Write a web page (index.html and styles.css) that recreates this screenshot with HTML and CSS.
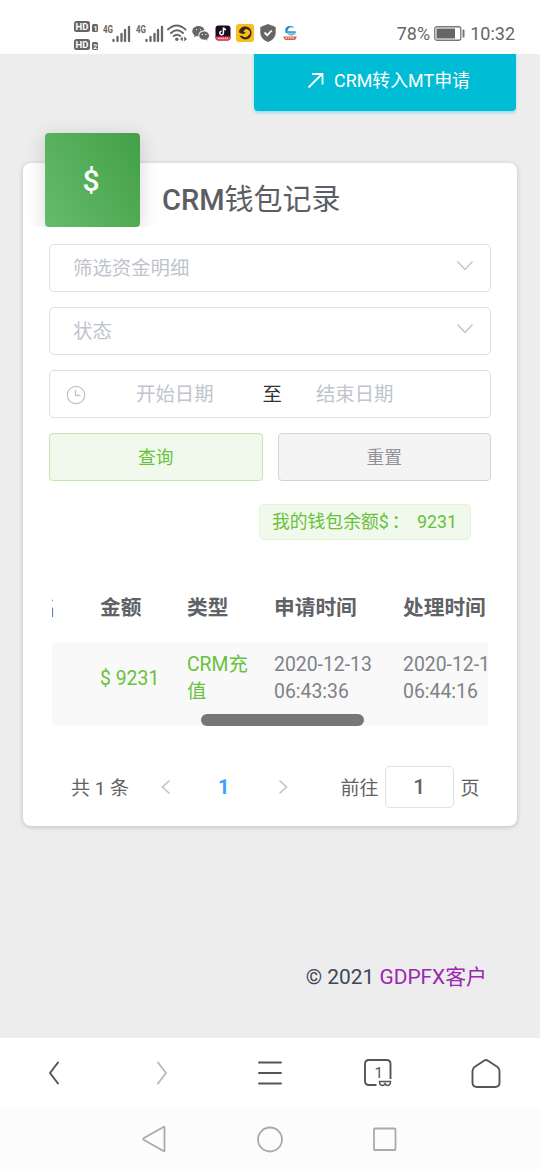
FILE: index.html
```html
<!DOCTYPE html>
<html lang="zh-CN">
<head>
    <meta charset="UTF-8">
    <meta name="viewport" content="width=device-width, initial-scale=1.0">
    <title>CRM钱包记录</title>
    <link rel="stylesheet" href="styles.css">
</head>
<body>

    <header class="status-bar">
        <div class="status-icons">
            <svg class="hd" width="25" height="32" viewBox="0 0 25 32">
                <rect x="0" y="2" width="16" height="11" rx="2.5" fill="#666"/>
                <text x="1.6" y="11" class="hd-text">HD</text>
                <rect x="18" y="5" width="6" height="8" rx="1.5" fill="#666"/>
                <text x="19.4" y="11.6" class="hd-num">1</text>
                <rect x="0" y="20" width="16" height="11" rx="2.5" fill="#666"/>
                <text x="1.6" y="29" class="hd-text">HD</text>
                <rect x="18" y="23" width="6" height="8" rx="1.5" fill="#666"/>
                <text x="19.2" y="29.6" class="hd-num">2</text>
            </svg>
            <svg class="signal" width="28" height="20" viewBox="0 0 28 20">
                <text x="0" y="10" class="net" textLength="10" lengthAdjust="spacingAndGlyphs">4G</text>
                <path d="M10.5 18v-1M14.5 18v-4M18.500 18v-7M22 18v-11M26 18V4" stroke="#666" stroke-width="2.300" stroke-linecap="round"/>
            </svg>
            <svg class="signal" width="28" height="20" viewBox="0 0 28 20">
                <text x="0" y="10" class="net" textLength="10" lengthAdjust="spacingAndGlyphs">4G</text>
                <path d="M10.5 18v-1M14.5 18v-4M18.500 18v-7M22 18v-11M26 18V4" stroke="#666" stroke-width="2.300" stroke-linecap="round"/>
            </svg>
            <svg class="wifi" width="21" height="18" viewBox="0 0 21 18">
                <path d="M1 5.500Q9.500-2.500 18.500 5.500M4 9q6-5.500 12 0M6.700 12q3.300-2.700 6.500 0" fill="none" stroke="#666" stroke-width="1.900" stroke-linecap="round"/>
                <circle cx="9.800" cy="15.300" r="1.700" fill="#666"/>
                <path d="M15.800 12.500v5l-2.800-2.500zM17.200 12.500v5l2.800-2.500z" fill="#666"/>
            </svg>
            <svg class="wechat" width="18" height="16" viewBox="0 0 18 16">
                <path d="M6.500 1C2.900 1 .3 3.300.3 6.200c0 1.700.9 3 2.200 4l-.6 2 2.300-1.200c.8.200 1.600.4 2.400.3-.7-3.200 2-6 6-6C12 2.800 9.600 1 6.500 1z" fill="#666"/>
                <path d="M12.200 6.200c-3 0-5.200 2-5.200 4.400s2.300 4.400 5.200 4.400c.6 0 1.200-.1 1.700-.3l2 1-.5-1.700c1.200-.8 1.900-2 1.900-3.400 0-2.400-2.300-4.400-5.100-4.400z" fill="#666" stroke="#fff" stroke-width=".5"/>
                <g fill="#fff"><circle cx="4.500" cy="4.600" r=".6"/><circle cx="8.500" cy="4.600" r=".6"/><circle cx="10.500" cy="9.400" r=".6"/><circle cx="14" cy="9.400" r=".6"/></g>
            </svg>
            <svg class="tiktok" width="16" height="16" viewBox="0 0 16 16">
                <rect x=".5" y=".5" width="15" height="15" rx="3" fill="#1b0d1d"/>
                <path d="M.5 11.500h15v1a3 3 0 0 1-3 3h-9a3 3 0 0 1-3-3z" fill="#ef4262"/>
                <path d="M8.400 2.500v5.400a1.800 1.800 0 1 1-1.800-1.700M8.400 2.500q.4 2 2.600 2.200" fill="none" stroke="#fff" stroke-width="1.500"/>
                <path d="M3 13.300h10" stroke="#fbd5dc" stroke-width="1.200" stroke-dasharray="1.500 .8"/>
            </svg>
            <svg class="lion" width="18" height="18" viewBox="0 0 18 18">
                <rect width="18" height="18" rx="3" fill="#f8bd20"/>
                <path d="M3 7Q5 2 10 2.500q5.500 1 5.500 6.500T10 15.500q-4.500 0-6.500-4l3 .5q2 2 4.500 1.500 3-1 3-4.500 0-3.500-3-4-3 0-3.500 2.500l2.500 1.500-3 1-3.500-1z" fill="#3b2a10"/>
                <path d="M5.500 4.500q5-2 8 1.500M6 13.500q5 2 8-3" fill="none" stroke="#3b2a10" stroke-width="1.300"/>
            </svg>
            <svg class="shield" width="16" height="18" viewBox="0 0 16 18">
                <path d="M8 0l7.700 3v5.500c0 4.500-3.200 7.700-7.700 9.500C3.500 16.200.3 13 .3 8.500V3z" fill="#666"/>
                <path d="M4.500 8.500l2.700 2.700 4.500-4.700" fill="none" stroke="#fff" stroke-width="1.800"/>
            </svg>
            <svg class="bird" width="14" height="16" viewBox="0 0 14 16">
                <path d="M2.500 8Q1 2 6 1q4-.5 5.500 2-4-1.500-6 .500Q4 5 4.500 8z" fill="#2587c6"/>
                <path d="M4 6.500h8.500v1.700H4zM5 9.500q4 1.500 7-.500" fill="#4aa6d8" stroke="#4aa6d8" stroke-width=".7"/>
                <path d="M0 11.500h14l-2 3.500H2z" fill="#d9604c"/>
                <path d="M2.500 13h9" stroke="#fff" stroke-width="1" stroke-dasharray="1.500 .8"/>
            </svg>
        </div>
        <div class="status-info">
            <span>78%</span>
            <svg class="battery" width="31" height="15" viewBox="0 0 31 15">
                <rect x=".75" y=".75" width="26" height="13.500" rx="2" fill="none" stroke="#777" stroke-width="1.300"/>
                <rect x="2.500" y="2.500" width="18.500" height="10" fill="#666"/>
                <rect x="28.500" y="3.500" width="2" height="8" rx=".5" fill="#777"/>
            </svg>
            <span>10:32</span>
        </div>
    </header>

    <main class="page">
        <a class="transfer-btn">
            <svg width="18" height="18" viewBox="0 0 18 18"><path d="M1.500 16.500L15 3M5 3h10.500v10.500" fill="none" stroke="#fff" stroke-width="1.800"/></svg>
            <span>CRM转入MT申请</span>
        </a>

        <section class="card">
            <div class="card-header">
                <div class="card-icon">$</div>
                <h4>CRM<span>钱包记录</span></h4>
            </div>

            <div class="filters">
                <div class="field">
                    <span>筛选资金明细</span>
                    <svg width="18" height="12" viewBox="0 0 18 12"><path d="M1.500 1.500L9 9.500l7.500-8" fill="none" stroke="#c0c4cc" stroke-width="1.400"/></svg>
                </div>
                <div class="field">
                    <span>状态</span>
                    <svg width="18" height="12" viewBox="0 0 18 12"><path d="M1.500 1.500L9 9.500l7.500-8" fill="none" stroke="#c0c4cc" stroke-width="1.400"/></svg>
                </div>
                <div class="field date-range">
                    <svg width="20" height="20" viewBox="0 0 20 20"><path d="M9.500 5v5.500h5" fill="none" stroke="#c0c4cc" stroke-width="1.300"/><circle cx="10" cy="10" r="8.700" fill="none" stroke="#c0c4cc" stroke-width="1.300"/></svg>
                    <span class="date-start">开始日期</span>
                    <span class="date-sep">至</span>
                    <span class="date-end">结束日期</span>
                </div>
                <div class="buttons">
                    <button class="btn btn-search">查询</button>
                    <button class="btn btn-reset">重置</button>
                </div>
            </div>

            <div class="balance"><span>我的钱包余额$<span class="colon">：</span></span><span>9231</span></div>

            <div class="table-wrap">
                <table>
                    <thead>
                        <tr>
                            <th class="col-name">名</th>
                            <th class="col-amount">金额</th>
                            <th class="col-type">类型</th>
                            <th class="col-time">申请时间</th>
                            <th class="col-time">处理时间</th>
                        </tr>
                    </thead>
                    <tbody>
                        <tr>
                            <td></td>
                            <td class="green">$ 9231</td>
                            <td class="green">CRM充<br>值</td>
                            <td>2020-12-13<br>06:43:36</td>
                            <td>2020-12-13<br>06:44:16</td>
                        </tr>
                    </tbody>
                </table>
                <div class="scroll-track"><div class="scroll-thumb"></div></div>
            </div>

            <div class="pagination">
                <span class="total">共 1 条</span>
                <svg class="prev" width="10" height="16" viewBox="0 0 10 16"><path d="M8.500 1.500L1.500 8l7 6.500" fill="none" stroke="#c0c4cc" stroke-width="1.700"/></svg>
                <span class="current">1</span>
                <svg class="next" width="10" height="16" viewBox="0 0 10 16"><path d="M1.500 1.500l7 6.500-7 6.500" fill="none" stroke="#c0c4cc" stroke-width="1.700"/></svg>
                <span class="jump">前往</span>
                <span class="page-input">1</span>
                <span class="unit">页</span>
            </div>
        </section>

        <footer class="copyright">© 2021 <a>GDPFX客户</a></footer>
    </main>

    <nav class="browser-bar">
        <svg width="32" height="32" viewBox="0 0 32 32"><path d="M20 5.500L12 16l8 10.500" fill="none" stroke="#555" stroke-width="2" stroke-linecap="round" stroke-linejoin="round"/></svg>
        <svg width="32" height="32" viewBox="0 0 32 32"><path d="M12 5.500l8 10.500-8 10.500" fill="none" stroke="#bbb" stroke-width="2" stroke-linecap="round" stroke-linejoin="round"/></svg>
        <svg width="32" height="32" viewBox="0 0 32 32"><path d="M5 5.500h22M5 16h22M5 26.500h22" stroke="#555" stroke-width="1.900" stroke-linecap="round"/></svg>
        <svg width="32" height="32" viewBox="0 0 32 32">
            <path d="M14.500 28H7q-4 0-4-4V7q0-4 4-4h17.500q4 0 4 4v15" fill="none" stroke="#555" stroke-width="1.900"/>
            <text x="12.500" y="21" class="tab-num">1</text>
            <path d="M17.500 24.500h11q0 4-3 4-1.600 0-2.500-1.800-.9 1.800-2.500 1.800-3 0-3-4z" fill="#fff" stroke="#555" stroke-width="1.500"/>
        </svg>
        <svg width="32" height="32" viewBox="0 0 32 32"><path d="M14 3.700L4.500 10Q2.500 11.500 2.500 14v11.500q0 4.500 4.500 4.500h18q4.500 0 4.500-4.500V14q0-2.500-2-4L18 3.700q-2-1.500-4 0z" fill="none" stroke="#555" stroke-width="1.900"/></svg>
    </nav>

    <nav class="system-bar">
        <svg width="28" height="28" viewBox="0 0 28 28"><path d="M23.500 2.500v23q0 1-1 .5L3 15q-1.500-1 0-2L22.500 2q1-.5 1 .5z" fill="none" stroke="#aaa" stroke-width="1.800"/></svg>
        <svg width="28" height="28" viewBox="0 0 28 28"><circle cx="14" cy="14.500" r="12" fill="none" stroke="#aaa" stroke-width="1.800"/></svg>
        <svg width="28" height="28" viewBox="0 0 28 28"><rect x="3" y="3.500" width="21.500" height="21.500" rx="1" fill="none" stroke="#aaa" stroke-width="1.800"/></svg>
    </nav>

</body>
</html>
```
FILE: styles.css
```css
* {
    box-sizing: border-box;
}

body {
    margin: 0;
    width: 540px;
    height: 1170px;
    overflow: hidden;
    background: #fff;
    color: #606266;
    font-family: Roboto, "Noto Sans CJK SC", sans-serif;
    font-size: 19.4px;
}

svg {
    display: block;
    flex: none;
}

/* status bar */
.status-bar {
    height: 54px;
    padding: 13px 25px 0 74px;
    display: flex;
    justify-content: space-between;
}

.status-icons {
    display: flex;
    align-items: center;
    height: 40px;
}

.hd {
    margin-top: 4px;
}

.hd-text {
    font-size: 9.5px;
    font-weight: bold;
    fill: #fff;
}

.hd-num {
    font-size: 7px;
    font-weight: bold;
    fill: #fff;
}

.net {
    font-size: 11.5px;
    font-weight: bold;
    fill: #666;
}

.signal {
    margin: -1px 0 0 4px;
}

.signal + .signal {
    margin-left: 5px;
}

.wifi {
    margin-left: 3px;
}

.wechat {
    margin-left: 4px;
}

.tiktok {
    margin-left: 5px;
}

.lion {
    margin-left: 5px;
}

.shield {
    margin-left: 6px;
}

.bird {
    margin-left: 7px;
}

.status-info {
    display: flex;
    align-items: center;
    height: 41px;
    font-size: 18px;
    color: #666;
}

.battery {
    margin: 0 5px 0 4px;
}

/* page */
.page {
    height: 984px;
    padding: 0 23px;
    background: #ededed;
    display: flow-root;
    overflow: hidden;
}

.transfer-btn {
    display: flex;
    align-items: center;
    justify-content: center;
    gap: 9px;
    width: 262px;
    height: 62px;
    margin: -5px 1px 0 auto;
    padding: 0 0 2px 7px;
    border-radius: 4px;
    background: #00bcd4;
    color: #fff;
    font-size: 17.9px;
    box-shadow: 0 2px 3px rgba(0, 188, 212, 0.35);
}

.transfer-btn svg {
    margin-top: 2px;
}

.card {
    height: 663px;
    margin-top: 52px;
    border-radius: 8px;
    background: #fff;
    box-shadow: 0 1px 5px rgba(0, 0, 0, 0.2);
}

.card-header {
    display: flex;
    height: 64px;
    padding-left: 22px;
}

.card-icon {
    width: 95px;
    height: 94px;
    margin-top: -30px;
    padding-right: 3px;
    border-radius: 4px;
    background: linear-gradient(60deg, #66bb6a, #43a047);
    box-shadow: 0 4px 20px rgba(0, 0, 0, 0.16);
    clip-path: inset(-30px -40px 0 -22px);
    color: #fff;
    font-size: 30px;
    font-weight: 500;
    line-height: 95px;
    text-align: center;
}

h4 {
    margin: 15px 0 0 22px;
    color: #5b5e62;
    font-size: 29px;
    font-weight: 500;
    line-height: 44px;
}

h4 span {
    font-weight: 400;
}

.filters {
    display: flex;
    flex-direction: column;
    gap: 15px;
    margin: 17px 26px 0;
}

.field {
    display: flex;
    align-items: center;
    justify-content: space-between;
    height: 48px;
    padding: 1px 16px 0 23px;
    border: 1.5px solid #dcdfe6;
    border-radius: 5px;
    color: #c0c4cc;
    line-height: 28px;
}

.field > svg {
    margin-top: -5px;
}

.date-range {
    justify-content: flex-start;
    padding-left: 16px;
}

.date-range > svg {
    margin-top: 0;
}

.date-start {
    margin-left: 50px;
}

.date-sep {
    margin-left: 49px;
    color: #303133;
}

.date-end {
    margin-left: 34px;
}

.buttons {
    display: flex;
    gap: 15px;
}

.btn {
    flex: 1;
    height: 48px;
    padding: 0 0 2px;
    border-radius: 4px;
    font-family: inherit;
    font-size: 17.7px;
}

.btn-search {
    border: 1.5px solid #c2e7b0;
    background: #f0f9eb;
    color: #67c23a;
}

.btn-reset {
    border: 1.5px solid #d3d4d6;
    background: #f4f4f5;
    color: #909399;
}

.balance {
    display: flex;
    justify-content: space-between;
    width: 212px;
    height: 36px;
    margin: 23px 46px 0 auto;
    padding: 0 13px 0 12px;
    border: 1.5px solid #e1f3d8;
    border-radius: 5px;
    background: #f0f9eb;
    color: #67c23a;
    font-size: 17.8px;
    line-height: 34px;
    white-space: nowrap;
}

.colon {
    margin-left: 3px;
}

/* table */
.table-wrap {
    width: 436px;
    height: 186px;
    margin: 0 0 0 29px;
    overflow: hidden;
}

table {
    width: 498px;
    margin-left: -18px;
    border-collapse: collapse;
    table-layout: fixed;
}

th, td {
    padding: 0;
    text-align: left;
    white-space: nowrap;
}

th {
    height: 102px;
    padding-top: 30px;
    font-size: 20.7px;
    font-weight: bold;
}

td {
    height: 72px;
    background: #f9f9f9;
    color: #7f8286;
    line-height: 27px;
}

.col-name {
    width: 66px;
    padding-left: 1px;
}

.col-amount {
    width: 87px;
}

.col-type {
    width: 87px;
}

.col-time {
    width: 129px;
}

td.green {
    color: #67c23a;
}

.scroll-track {
    height: 12px;
    background: #f9f9f9;
}

.scroll-thumb {
    width: 163px;
    height: 12px;
    margin-left: 149px;
    border-radius: 6px;
    background: #777;
}

/* pagination */
.pagination {
    display: flex;
    align-items: center;
    height: 42px;
    margin: 40px 36px 0 48px;
    font-size: 19px;
    white-space: nowrap;
}

.total,
.jump,
.unit {
    margin-top: -2px;
}

.prev {
    margin-left: 32px;
}

.current {
    margin-left: 47px;
    color: #409eff;
    font-size: 20px;
    font-weight: bold;
}

.next {
    margin-left: 48px;
}

.jump {
    margin-left: 53px;
}

.page-input {
    width: 69px;
    height: 42px;
    margin: 0 7px 0 6px;
    border: 1.5px solid #dcdfe6;
    border-radius: 5px;
    font-size: 21px;
    font-weight: 500;
    line-height: 41px;
    text-align: center;
}

.copyright {
    margin: 136px 30px 0 0;
    color: #3c4858;
    font-size: 20.9px;
    line-height: 30px;
    text-align: right;
}

.copyright a {
    color: #9c27b0;
}

/* bottom bars */
.browser-bar {
    display: flex;
    justify-content: space-between;
    align-items: center;
    height: 70px;
    padding: 0 38px;
    background: #fff;
}

.tab-num {
    font-size: 15px;
    fill: #555;
}

.system-bar {
    display: flex;
    justify-content: center;
    gap: 87px;
    height: 62px;
    padding-top: 17px;
    background: #fcfcfc;
}
```
